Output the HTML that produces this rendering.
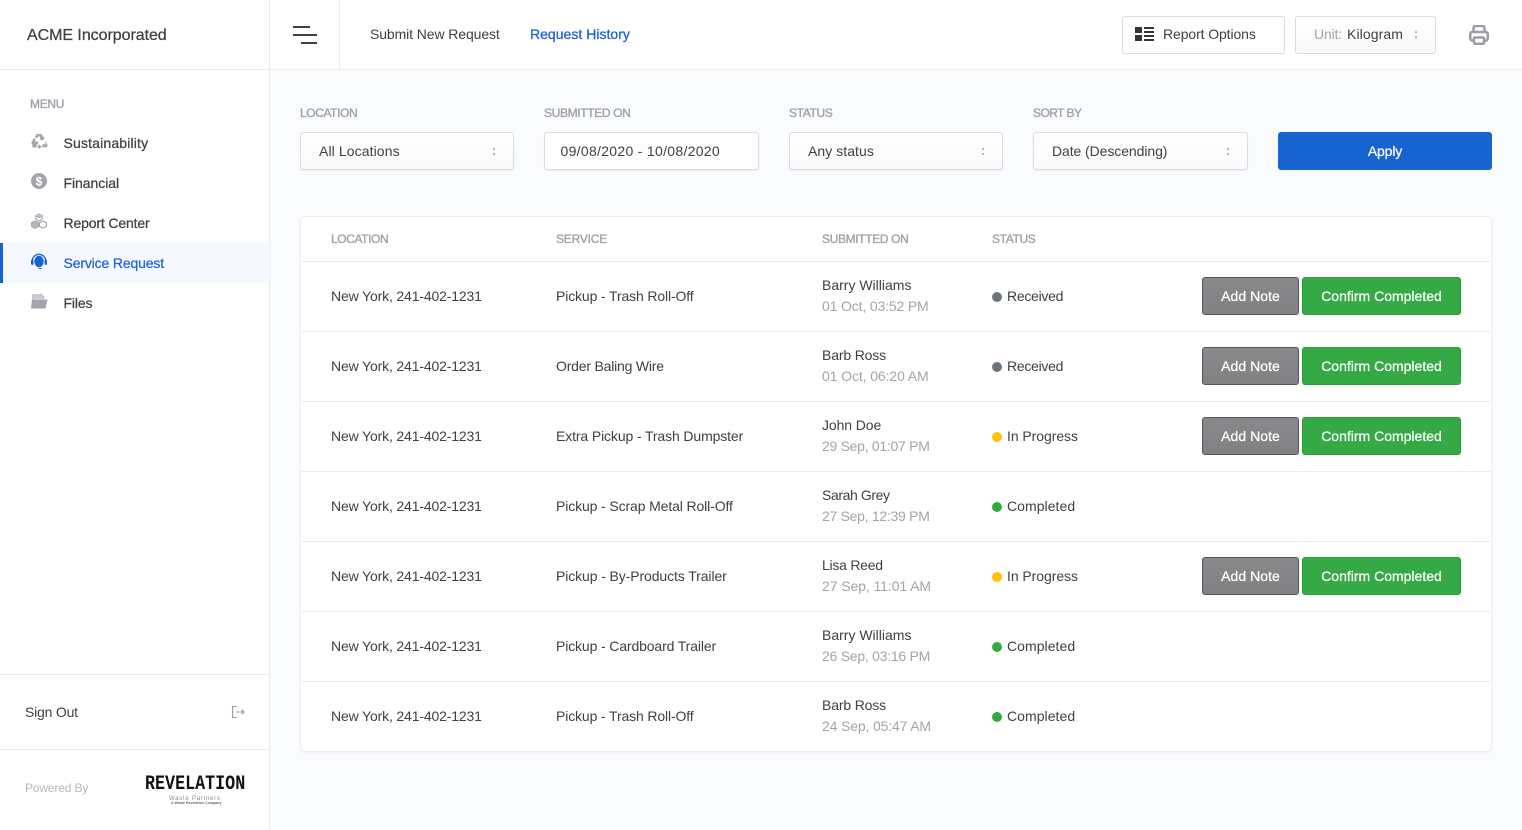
<!DOCTYPE html>
<html lang="en">
<head>
<meta charset="utf-8">
<title>Service Request</title>
<style>
*{box-sizing:border-box}
html,body{margin:0;padding:0;width:1522px;height:830px;overflow:hidden;background:#fafbfd;font-family:"Liberation Sans",Arial,sans-serif;font-size:14px;color:#3f4047;letter-spacing:-.15px}
.t{position:absolute;white-space:nowrap;line-height:20px}
.abs{position:absolute}
.lab{font-size:12px;font-weight:400;color:#a0a0ab;letter-spacing:-.4px;-webkit-text-stroke:.35px #a0a0ab}
#side{position:absolute;left:0;top:0;width:270px;height:830px;background:#fff;border-right:1px solid #e9ebf3}
#top{position:absolute;left:270px;top:0;width:1252px;height:70px;background:#fff;border-bottom:1px solid #e9ebf3}
.menu{font-size:14px;color:#3f4047;-webkit-text-stroke:.25px currentColor}
.sel{position:absolute;top:132px;height:38px;border:1px solid #d8dbe8;border-radius:3px;background:linear-gradient(#fff,#f9f9fa);box-shadow:0 1px 1px rgba(60,60,90,.08)}
.arr{position:absolute;width:3px;height:9px}
.arr:before,.arr:after{content:"";position:absolute;left:0;border-left:1.5px solid transparent;border-right:1.5px solid transparent}
.arr:before{top:0;border-bottom:3px solid #9a9aa3}
.arr:after{bottom:0;border-top:3px solid #9a9aa3}
#card{position:absolute;left:300px;top:216px;width:1192px;height:536px;background:#fff;border:1px solid #eceef5;border-radius:4px;box-shadow:0 1px 2px rgba(60,60,90,.05)}
.ln{position:absolute;left:301px;width:1190px;height:1px;background:#ebedf2}
.dot{position:absolute;left:992px;width:10px;height:10px;border-radius:50%}
.gr{background:#6c757d}.ye{background:#ffc107}.gn{background:#34a944}
.btn{position:absolute;height:38px;border-radius:3px;color:#fff;text-align:center;line-height:36px;font-size:14px;-webkit-text-stroke:.25px #fff;letter-spacing:0}
.note{left:1202px;width:97px;background:linear-gradient(#89898b,#818183);border:1px solid #56565a;letter-spacing:.05px}
.conf{left:1302px;width:159px;background:#34a944;border:1px solid #2f9d3e}
.sub{color:#a3a3ab}
.cp{letter-spacing:.05px}
.rc{letter-spacing:-.28px}
.ip{letter-spacing:-.06px}
</style>
</head>
<body>
<div id="top"></div>
<div id="side"></div>

<div class="t" style="left:27px;top:26px;font-size:16px;color:#3f4047;letter-spacing:-.05px;-webkit-text-stroke:.25px #3f4047">ACME Incorporated</div>

<div class="abs" style="left:339px;top:0;width:1px;height:70px;background:#e9ebf3"></div>
<div class="abs" style="left:293px;top:26px;width:17px;height:2px;background:#3f4047"></div>
<div class="abs" style="left:293px;top:34px;width:24px;height:2px;background:#3f4047"></div>
<div class="abs" style="left:301px;top:42px;width:16px;height:2px;background:#3f4047"></div>

<div class="t" style="left:370px;top:24px;letter-spacing:-.1px">Submit New Request</div>
<div class="t" style="left:530px;top:24px;color:#1f63d8;letter-spacing:.02px;-webkit-text-stroke:.3px #1f63d8">Request History</div>

<div class="abs" style="left:1122px;top:16px;width:163px;height:38px;border:1px solid #d8dbe8;border-radius:3px;background:#fff"></div>
<svg class="abs" style="left:1135px;top:26px" width="19" height="16" viewBox="0 0 19 16"><path fill="#333438" d="M0 1h7v6H0zM0 9h7v6H0zM9 1h10v2H9zM9 5h10v2H9zM9 9h10v2H9zM9 13h10v2H9z"/></svg>
<div class="t" style="left:1163px;top:24px;letter-spacing:-.1px">Report Options</div>

<div class="abs" style="left:1295px;top:16px;width:141px;height:38px;border:1px solid #d8dbe8;border-radius:3px;background:linear-gradient(#fff,#f8f8f9)"></div>
<div class="t" style="left:1314px;top:24px;color:#a3a3ab">Unit:</div>
<div class="t" style="left:1347px;top:24px;letter-spacing:.1px">Kilogram</div>
<div class="arr" style="left:1415px;top:30px"></div>

<svg class="abs" style="left:1469px;top:25px" width="20" height="20" viewBox="0 0 20 20" fill="none" stroke="#9b9ca6" stroke-width="2.500"><path d="M4.500 7V3a2 2 0 0 1 2-2h7a2 2 0 0 1 2 2v4"/><rect x="1.250" y="7" width="17.500" height="8.500" rx="2"/><rect x="5" y="12.500" width="10" height="6.250" rx="1" fill="#fff"/></svg>

<!-- sidebar -->
<div class="abs" style="left:0;top:69px;width:269px;height:1px;background:#e9ebf3"></div>
<div class="t lab" style="left:30px;top:94px;letter-spacing:-.3px">MENU</div>

<svg class="abs" style="left:31px;top:133px" width="17" height="16" viewBox="0 0 17 16"><path fill="#a3a4ac" d="M6 1h4.500l2 3.200 1.300-.7-1.500 3.700-4-.4 1.300-.8L8 2.500 6.200 5.300 3.700 3.800zM2.800 5l3 1.700.2 0-1.200-.7L3.500 8.500l3.700.1v3H2.200C.6 11.600 0 10 .8 8.800zM14 8l2.300 3.500c.6 1.200-.2 2.700-1.500 2.700h-3.300v-3h3zM5.500 11.500v3H2.200L1 12.800l.6-1.300zM8 11.500l3 2.300-3 2.200v-1.500H6.500v-1.800H8z"/></svg>
<div class="t menu" style="left:63.500px;top:133px;letter-spacing:.16px">Sustainability</div>

<svg class="abs" style="left:31px;top:173px" width="16" height="16" viewBox="0 0 16 16"><circle cx="8" cy="8" r="8" fill="#a3a4ac"/><text x="8" y="12.300" text-anchor="middle" font-family="Liberation Sans" font-weight="700" font-size="12" fill="#fff" letter-spacing="0">$</text></svg>
<div class="t menu" style="left:63.500px;top:173px;letter-spacing:-.05px">Financial</div>

<svg class="abs" style="left:31px;top:213px" width="16" height="16" viewBox="0 0 16 16"><g stroke="#a3a4ac" stroke-width="1.100" stroke-linejoin="round"><path d="M8 1l3.200 1.700v3.600L8 8 4.800 6.300V2.700z" fill="#fff"/><path d="M4 8l3.500 1.700v3.800L4 15.300.6 13.500V9.700z" fill="#b9bac1"/><path d="M12 8l3.400 1.700v3.800L12 15.300l-3.500-1.800V9.700z" fill="#fff"/><path d="M8 1v3.500M4.800 2.700L8 4.500l3.200-1.800" fill="none"/></g></svg>
<div class="t menu" style="left:63.500px;top:213px">Report Center</div>

<div class="abs" style="left:0;top:243px;width:269px;height:40px;background:#f5f8fe"></div>
<div class="abs" style="left:0;top:243px;width:3px;height:40px;background:#1763d6"></div>
<svg class="abs" style="left:31px;top:253px" width="16" height="17" viewBox="0 0 16 17"><path fill="none" stroke="#1763d6" stroke-width="1.300" d="M1.300 8a6.700 6.700 0 0 1 13.400 0"/><ellipse cx="8" cy="8.500" rx="4.700" ry="5.700" fill="#1763d6"/><rect x="0" y="6.500" width="2.500" height="5.500" rx="1.200" fill="#1763d6"/><rect x="13.500" y="6.500" width="2.500" height="5.500" rx="1.200" fill="#1763d6"/><path fill="none" stroke="#1763d6" d="M7.500 15.500h3"/></svg>
<div class="t menu" style="left:63.500px;top:253px;color:#1f63d8">Service Request</div>

<svg class="abs" style="left:31px;top:293px" width="17" height="16" viewBox="0 0 17 16"><path fill="#c9cad0" d="M1 7V1h8l1-1 3.500 3.500V6H3z"/><path fill="#a3a4ac" d="M1 6.500h15.500L14.500 15.500H0z"/></svg>
<div class="t menu" style="left:63.500px;top:293px">Files</div>

<div class="abs" style="left:0;top:674px;width:269px;height:1px;background:#e9ebf3"></div>
<div class="t" style="left:25px;top:702px;letter-spacing:-.2px">Sign Out</div>
<svg class="abs" style="left:231px;top:705px" width="14" height="14" viewBox="0 0 14 14" fill="none" stroke="#9b9ca6" stroke-width="1.100"><path d="M6 1.500H1.500v11H6M5 7h8M10.500 4.500L13 7l-2.500 2.500"/></svg>

<div class="abs" style="left:0;top:749px;width:269px;height:1px;background:#e9ebf3"></div>
<div class="t" style="left:25px;top:778px;font-size:12px;color:#b8b8bf;letter-spacing:-.15px">Powered By</div>
<div class="t" style="left:144.500px;top:775px;font-family:'Liberation Mono',monospace;font-weight:700;font-size:20px;letter-spacing:0;color:#111;transform:scaleX(.835);transform-origin:left center">REVELATION</div>
<div class="t" style="left:169px;top:789px;font-size:6px;letter-spacing:.75px;color:#8a8a80">Waste Partners</div>
<div class="t" style="left:171px;top:793px;font-size:3.500px;letter-spacing:.05px;color:#666;font-weight:700">A Waste Revelation Company</div>

<!-- filters -->
<div class="t lab" style="left:300px;top:103px">LOCATION</div>
<div class="t lab" style="left:544px;top:103px;letter-spacing:-.35px">SUBMITTED ON</div>
<div class="t lab" style="left:789px;top:103px;letter-spacing:-.35px">STATUS</div>
<div class="t lab" style="left:1033px;top:103px;letter-spacing:-.55px">SORT BY</div>

<div class="sel" style="left:300px;width:214px"></div>
<div class="t" style="left:319px;top:141px;letter-spacing:.1px">All Locations</div>
<div class="arr" style="left:493px;top:147px"></div>

<div class="sel" style="left:544px;width:215px;background:#fff"></div>
<div class="t" style="left:560.500px;top:141px;letter-spacing:.3px">09/08/2020 - 10/08/2020</div>

<div class="sel" style="left:789px;width:214px"></div>
<div class="t" style="left:808px;top:141px;letter-spacing:.05px">Any status</div>
<div class="arr" style="left:982px;top:147px"></div>

<div class="sel" style="left:1033px;width:215px"></div>
<div class="t" style="left:1052px;top:141px;letter-spacing:-.08px">Date (Descending)</div>
<div class="arr" style="left:1227px;top:147px"></div>

<div class="abs" style="left:1278px;top:132px;width:214px;height:38px;background:#1763cf;border:1px solid #1a66d6;border-radius:3px;color:#fff;text-align:center;line-height:36px;-webkit-text-stroke:.25px #fff">Apply</div>

<!-- table -->
<div id="card"></div>
<div class="t lab" style="left:331px;top:229px">LOCATION</div>
<div class="t lab" style="left:556px;top:229px;letter-spacing:-.2px">SERVICE</div>
<div class="t lab" style="left:822px;top:229px;letter-spacing:-.35px">SUBMITTED ON</div>
<div class="t lab" style="left:992px;top:229px;letter-spacing:-.35px">STATUS</div>

<div class="ln" style="top:261px"></div>
<div class="ln" style="top:331px"></div>
<div class="ln" style="top:401px"></div>
<div class="ln" style="top:471px"></div>
<div class="ln" style="top:541px"></div>
<div class="ln" style="top:611px"></div>
<div class="ln" style="top:681px"></div>

<!-- row 1 -->
<div class="t" style="left:331px;top:286px">New York, 241-402-1231</div>
<div class="t" style="left:556px;top:286px;letter-spacing:-.13px">Pickup - Trash Roll-Off</div>
<div class="t" style="left:822px;top:275px;letter-spacing:0">Barry Williams</div>
<div class="t sub" style="left:822px;top:296px">01 Oct, 03:52 PM</div>
<div class="dot gr" style="top:292px"></div>
<div class="t rc" style="left:1007px;top:286px">Received</div>
<div class="btn note" style="top:277px">Add Note</div>
<div class="btn conf" style="top:277px">Confirm Completed</div>

<!-- row 2 -->
<div class="t" style="left:331px;top:356px">New York, 241-402-1231</div>
<div class="t" style="left:556px;top:356px;letter-spacing:-.2px">Order Baling Wire</div>
<div class="t" style="left:822px;top:345px">Barb Ross</div>
<div class="t sub" style="left:822px;top:366px;letter-spacing:-.1px">01 Oct, 06:20 AM</div>
<div class="dot gr" style="top:362px"></div>
<div class="t rc" style="left:1007px;top:356px">Received</div>
<div class="btn note" style="top:347px">Add Note</div>
<div class="btn conf" style="top:347px">Confirm Completed</div>

<!-- row 3 -->
<div class="t" style="left:331px;top:426px">New York, 241-402-1231</div>
<div class="t" style="left:556px;top:426px;letter-spacing:-.12px">Extra Pickup - Trash Dumpster</div>
<div class="t" style="left:822px;top:415px;letter-spacing:-.1px">John Doe</div>
<div class="t sub" style="left:822px;top:436px;letter-spacing:-.28px">29 Sep, 01:07 PM</div>
<div class="dot ye" style="top:432px"></div>
<div class="t ip" style="left:1007px;top:426px">In Progress</div>
<div class="btn note" style="top:417px">Add Note</div>
<div class="btn conf" style="top:417px">Confirm Completed</div>

<!-- row 4 -->
<div class="t" style="left:331px;top:496px">New York, 241-402-1231</div>
<div class="t" style="left:556px;top:496px;letter-spacing:-.12px">Pickup - Scrap Metal Roll-Off</div>
<div class="t" style="left:822px;top:485px;letter-spacing:-.4px">Sarah Grey</div>
<div class="t sub" style="left:822px;top:506px;letter-spacing:-.28px">27 Sep, 12:39 PM</div>
<div class="dot gn" style="top:502px"></div>
<div class="t cp" style="left:1007px;top:496px">Completed</div>

<!-- row 5 -->
<div class="t" style="left:331px;top:566px">New York, 241-402-1231</div>
<div class="t" style="left:556px;top:566px;letter-spacing:-.1px">Pickup - By-Products Trailer</div>
<div class="t" style="left:822px;top:555px;letter-spacing:-.25px">Lisa Reed</div>
<div class="t sub" style="left:822px;top:576px;letter-spacing:-.08px">27 Sep, 11:01 AM</div>
<div class="dot ye" style="top:572px"></div>
<div class="t ip" style="left:1007px;top:566px">In Progress</div>
<div class="btn note" style="top:557px">Add Note</div>
<div class="btn conf" style="top:557px">Confirm Completed</div>

<!-- row 6 -->
<div class="t" style="left:331px;top:636px">New York, 241-402-1231</div>
<div class="t" style="left:556px;top:636px;letter-spacing:-.13px">Pickup - Cardboard Trailer</div>
<div class="t" style="left:822px;top:625px;letter-spacing:0">Barry Williams</div>
<div class="t sub" style="left:822px;top:646px;letter-spacing:-.25px">26 Sep, 03:16 PM</div>
<div class="dot gn" style="top:642px"></div>
<div class="t cp" style="left:1007px;top:636px">Completed</div>

<!-- row 7 -->
<div class="t" style="left:331px;top:706px">New York, 241-402-1231</div>
<div class="t" style="left:556px;top:706px;letter-spacing:-.13px">Pickup - Trash Roll-Off</div>
<div class="t" style="left:822px;top:695px">Barb Ross</div>
<div class="t sub" style="left:822px;top:716px">24 Sep, 05:47 AM</div>
<div class="dot gn" style="top:712px"></div>
<div class="t cp" style="left:1007px;top:706px">Completed</div>
</body>
</html>
